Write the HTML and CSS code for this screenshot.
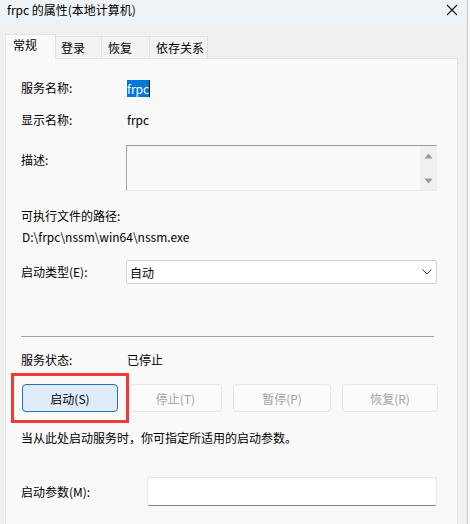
FILE: index.html
```html
<!DOCTYPE html>
<html lang="zh-CN">
<head>
<meta charset="utf-8">
<title>frpc 的属性(本地计算机)</title>
<link rel="stylesheet" href="styles.css">
</head>
<body>
<div class="window">
  <div class="titlebar">
    <span class="title">frpc 的属性(本地计算机)</span>
    <svg class="close" width="12" height="12" viewBox="0 0 12 12"><path d="M1 1 L11 11 M11 1 L1 11" stroke="#1a1a1a" stroke-width="1.1" fill="none"/></svg>
  </div>
  <div class="tabs">
    <div class="tab active t1">常规</div>
    <div class="tab t2">登录</div>
    <div class="tab t3">恢复</div>
    <div class="tab t4">依存关系</div>
  </div>
  <div class="panel">
    <div class="row r-name">
      <span class="label">服务名称:</span>
      <span class="value"><span class="selected">frpc</span><span class="caret"></span></span>
    </div>
    <div class="row r-display">
      <span class="label">显示名称:</span>
      <span class="value">frpc</span>
    </div>
    <div class="row r-desc">
      <span class="label">描述:</span>
      <div class="textarea">
        <div class="scroll">
          <svg width="9" height="6" viewBox="0 0 9 6"><path d="M0.5 5.5 L4.5 0.5 L8.5 5.5 Z" fill="#9a9a9a"/></svg>
          <svg width="9" height="6" viewBox="0 0 9 6"><path d="M0.5 0.5 L4.5 5.5 L8.5 0.5 Z" fill="#9a9a9a"/></svg>
        </div>
      </div>
    </div>
    <div class="line r-pathlabel">可执行文件的路径:</div>
    <div class="line r-path">D:\frpc\nssm\win64\nssm.exe</div>
    <div class="row r-type">
      <span class="label">启动类型(E):</span>
      <div class="select">
        <span>自动</span>
        <svg width="10" height="6" viewBox="0 0 10 6"><path d="M0.5 0.5 L5 5 L9.5 0.5" stroke="#444" stroke-width="1" fill="none"/></svg>
      </div>
    </div>
    <div class="sep"></div>
    <div class="row r-status">
      <span class="label">服务状态:</span>
      <span class="value">已停止</span>
    </div>
    <div class="buttons">
      <div class="btn primary">启动(S)</div>
      <div class="btn disabled">停止(T)</div>
      <div class="btn disabled">暂停(P)</div>
      <div class="btn disabled">恢复(R)</div>
      <div class="highlight"></div>
    </div>
    <div class="line r-note">当从此处启动服务时，你可指定所适用的启动参数。</div>
    <div class="row r-param">
      <span class="label wide">启动参数(M):</span>
      <div class="input"></div>
    </div>
  </div>
</div>
</body>
</html>
```

FILE: styles.css
```css
* { box-sizing: border-box; }
html, body { margin: 0; padding: 0; }
body {
  width: 470px;
  height: 524px;
  overflow: hidden;
  background: #fafafa;
  font-family: "Noto Sans CJK SC", "Noto Sans", sans-serif;
  font-size: 12px;
  color: #000;
}
.window {
  width: 468px;
  height: 524px;
  background: #f0f0f0;
  border-right: 1px solid #c9c9c9;
  display: flex;
  flex-direction: column;
}
.titlebar {
  height: 23px;
  flex: none;
  background: #eef3f8;
  display: flex;
  align-items: center;
  justify-content: space-between;
  padding: 0 9px 3px 7px;
}
.title { line-height: 16px; }
.close { display: block; margin-top: 0; }
.tabs {
  flex: none;
  display: flex;
  align-items: flex-end;
  padding: 10px 0 0 5px;
  height: 35px;
  position: relative;
  z-index: 2;
}
.tab {
  height: 22px;
  line-height: 21px;
  border: 1px solid #e3e3e3;
  border-bottom: none;
  border-left: none;
  background: #f3f3f3;
  padding-left: 6px;
}
.tab.active {
  height: 25px;
  line-height: 20px;
  background: #f9f9f9;
  border-left: 1px solid #e3e3e3;
  padding-left: 7px;
  margin-bottom: -1px;
}
.t1 { width: 51px; }
.t2 { width: 46px; padding-left: 5px; }
.t3 { width: 48px; }
.t4 { width: 58px; }
.panel {
  flex: 1;
  margin-left: 5px;
  width: 453px;
  background: #f9f9f9;
  border: 1px solid #e3e3e3;
  border-bottom: none;
  padding: 20px 19px 0 15px;
  position: relative;
  z-index: 1;
}
.row { display: flex; align-items: center; }
.label { width: 105px; flex: none; line-height: 18px; }
.label.wide { width: 126px; }
.line { line-height: 18px; }
.r-name { height: 18px; }
.value { line-height: 18px; display: flex; align-items: center; padding-left: 1px; }
.selected {
  background: #0078d7;
  color: #fff;
  line-height: 17px;
  height: 17px;
  padding: 0 0 0 0;
}
.caret { width: 1px; height: 17px; background: #2a1a00; }
.r-display { margin-top: 14px; height: 18px; }
.r-desc { margin-top: 16px; align-items: flex-start; }
.r-desc .label { margin-top: 6px; }
.textarea {
  width: 311px;
  height: 46px;
  border-top: 1px solid #9a9a9a;
  border-left: 1px solid #a5a5a5;
  border-right: 1px solid #ececec;
  border-bottom: 1px solid #ececec;
  background: #f9f9f9;
  display: flex;
  justify-content: flex-end;
}
.scroll {
  width: 16px;
  height: 100%;
  background: #f0f0f0;
  display: flex;
  flex-direction: column;
  align-items: center;
  justify-content: space-between;
  padding: 7px 0 6px;
}
.scroll svg { display: block; }
.r-pathlabel { margin-top: 16px; }
.r-path { margin-top: 3px; padding-left: 1px; }
.r-type { margin-top: 14px; }
.select {
  width: 311px;
  height: 24px;
  background: #fff;
  border: 1px solid #d0d0d0;
  border-radius: 2px;
  display: flex;
  align-items: center;
  justify-content: space-between;
  padding: 0 4px 0 3px;
}
.select svg { display: block; }
.sep {
  margin-top: 52px;
  height: 1px;
  background: #a3a3a3;
  margin-right: 4px;
}
.r-status { margin-top: 14px; height: 18px; }
.buttons {
  margin-top: 15px;
  margin-left: 1px;
  display: grid;
  grid-template-columns: 96px 93px 98px 96px;
  column-gap: 11px;
  position: relative;
}
.btn {
  height: 28px;
  border-radius: 4px;
  display: flex;
  align-items: center;
  justify-content: center;
}
.btn.primary {
  background: #e0ecf9;
  border: 1px solid #1f73c7;
}
.btn.disabled {
  background: #fbfbfb;
  border: 1px solid #e6e6e6;
  color: #a3a3a3;
}
.highlight {
  position: absolute;
  left: -11px;
  top: -11px;
  width: 118px;
  height: 50px;
  border: 3px solid #f03a3a;
}
.r-note { margin-top: 17px; }
.r-param { margin-top: 30px; }
.input {
  width: 290px;
  height: 29px;
  background: #fff;
  border: 1px solid #e6e6e6;
  border-bottom: 1px solid #868686;
  border-radius: 3px;
}
```
